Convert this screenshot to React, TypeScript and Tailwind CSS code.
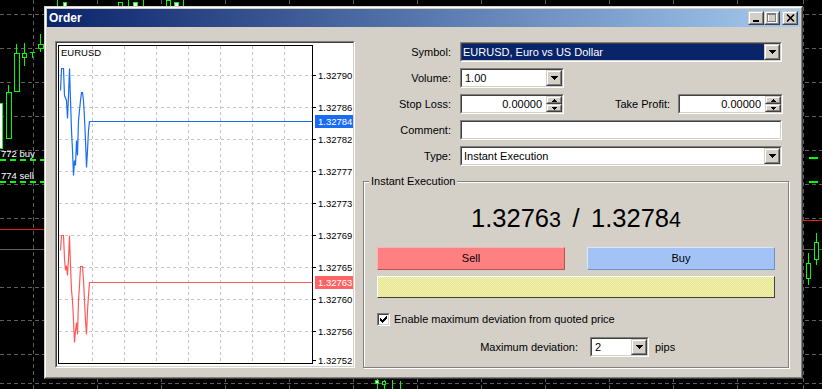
import React from "react";

const FONT = "font-['Liberation_Sans',Arial,sans-serif]";
const sunkenOuter = "border border-t-[#808080] border-l-[#808080] border-b-white border-r-white";
const sunkenInner = "border border-t-[#404040] border-l-[#404040] border-b-[#d4d0c8] border-r-[#d4d0c8]";
const raisedOuter = "border border-t-[#d4d0c8] border-l-[#d4d0c8] border-b-[#404040] border-r-[#404040]";
const raisedInner = "border border-t-white border-l-white border-b-[#808080] border-r-[#808080]";

function DownArrow() {
  return (
    <svg width="7" height="4" viewBox="0 0 7 4" shapeRendering="crispEdges">
      <rect x="0" y="0" width="7" height="1" fill="#000" />
      <rect x="1" y="1" width="5" height="1" fill="#000" />
      <rect x="2" y="2" width="3" height="1" fill="#000" />
      <rect x="3" y="3" width="1" height="1" fill="#000" />
    </svg>
  );
}

function SmallArrow({ up }: { up?: boolean }) {
  return (
    <svg width="5" height="3" viewBox="0 0 5 3" shapeRendering="crispEdges">
      {up ? (
        <>
          <rect x="2" y="0" width="1" height="1" fill="#000" />
          <rect x="1" y="1" width="3" height="1" fill="#000" />
          <rect x="0" y="2" width="5" height="1" fill="#000" />
        </>
      ) : (
        <>
          <rect x="0" y="0" width="5" height="1" fill="#000" />
          <rect x="1" y="1" width="3" height="1" fill="#000" />
          <rect x="2" y="2" width="1" height="1" fill="#000" />
        </>
      )}
    </svg>
  );
}

function Field({ className = "", inner = "", children }: { className?: string; inner?: string; children?: React.ReactNode }) {
  return (
    <div className={`${sunkenOuter} h-[20px] ${className}`}>
      <div className={`${sunkenInner} h-full w-full bg-white flex items-stretch ${inner}`}>{children}</div>
    </div>
  );
}

function DropBtn() {
  return (
    <div className={`${raisedOuter} w-[16px] h-full shrink-0 bg-[#d4d0c8]`}>
      <div className={`${raisedInner} w-full h-full flex items-center justify-center`}>
        <DownArrow />
      </div>
    </div>
  );
}

function SpinBtns() {
  return (
    <div className="w-[16px] h-full shrink-0 flex flex-col">
      <div className={`${raisedOuter} flex-1 bg-[#d4d0c8]`}>
        <div className={`${raisedInner} w-full h-full flex items-center justify-center`}>
          <SmallArrow up />
        </div>
      </div>
      <div className={`${raisedOuter} flex-1 bg-[#d4d0c8]`}>
        <div className={`${raisedInner} w-full h-full flex items-center justify-center`}>
          <SmallArrow />
        </div>
      </div>
    </div>
  );
}

function TitleBtn({ children }: { children: React.ReactNode }) {
  return (
    <div className={`${raisedOuter} w-[16px] h-[14px] bg-[#d4d0c8]`}>
      <div className={`${raisedInner} w-full h-full flex items-center justify-center`}>{children}</div>
    </div>
  );
}

function Background() {
  const hl = [14, 48, 82, 116, 150, 184, 218, 287, 320, 354, 383];
  const green = "#00ff00";
  const ff = "Liberation Sans, Arial, sans-serif";
  return (
    <svg className="absolute left-0 top-0" width="822" height="389" viewBox="0 0 822 389" shapeRendering="crispEdges">
      {hl.map((y) => (
        <line key={y} x1="0" x2="822" y1={y + 0.5} y2={y + 0.5} stroke="#5f5f5f" strokeDasharray="4 3" />
      ))}
      <line x1="0" x2="822" y1="249.5" y2="249.5" stroke="#5f5f5f" />
      {[33, 97, 161, 225, 289, 353, 417, 481, 545, 609, 673, 737, 803].map((x) => (
        <line key={x} x1={x + 0.5} x2={x + 0.5} y1="0" y2="389" stroke="#5f5f5f" strokeDasharray="4 3" />
      ))}
      <line x1="0" x2="44" y1="229.5" y2="229.5" stroke="#e02020" />
      <line x1="803" x2="822" y1="220.5" y2="220.5" stroke="#e02020" />
      <rect x="-2" y="103" width="4" height="45" fill="#fff" stroke={green} />
      <line x1="8.5" x2="8.5" y1="85" y2="92" stroke={green} />
      <rect x="6.5" y="92.5" width="5" height="46" fill="#000" stroke={green} />
      <line x1="16.5" x2="16.5" y1="44" y2="53" stroke={green} />
      <rect x="14.5" y="53.5" width="5" height="38" fill="#000" stroke={green} />
      <line x1="24.5" x2="24.5" y1="43" y2="66" stroke={green} />
      <rect x="22.5" y="53.5" width="4" height="4" fill="#000" stroke={green} />
      <line x1="32.5" x2="32.5" y1="52" y2="58" stroke={green} />
      <line x1="30" x2="35" y1="52.5" y2="52.5" stroke={green} />
      <line x1="40.5" x2="40.5" y1="34" y2="52" stroke={green} />
      <rect x="38.5" y="44.5" width="5" height="4" fill="#000" stroke={green} />
      <line x1="57.5" x2="57.5" y1="0" y2="6" stroke={green} />
      <rect x="63.5" y="2.5" width="3" height="4" fill="#fff" stroke={green} />
      <rect x="118.5" y="2.5" width="4" height="4" fill="#000" stroke={green} />
      <line x1="128.5" x2="128.5" y1="0" y2="6" stroke={green} />
      <rect x="133.5" y="2.5" width="4" height="4" fill="#fff" stroke={green} />
      <line x1="143.5" x2="143.5" y1="0" y2="6" stroke={green} />
      <rect x="166.5" y="0" width="4" height="6" fill="#000" stroke={green} />
      <rect x="174.5" y="2.5" width="4" height="4" fill="#fff" stroke={green} />
      <line x1="183.5" x2="183.5" y1="0" y2="6" stroke={green} />
      <line x1="0" x2="44" y1="159.5" y2="159.5" stroke={green} strokeWidth="2" strokeDasharray="6 4" />
      <line x1="0" x2="44" y1="181.5" y2="181.5" stroke={green} strokeWidth="2" strokeDasharray="6 4" />
      <text x="1" y="157" fill="#fff" fontSize="9.5" fontFamily={ff}>772 buy</text>
      <text x="1" y="179" fill="#fff" fontSize="9.5" fontFamily={ff}>774 sell</text>
      <line x1="809" x2="818" y1="157.5" y2="157.5" stroke={green} strokeWidth="2" />
      <line x1="809" x2="818" y1="181.5" y2="181.5" stroke={green} strokeWidth="2" />
      <line x1="816.5" x2="816.5" y1="233" y2="265" stroke={green} />
      <rect x="814.5" y="242.5" width="4" height="17" fill="#000" stroke={green} />
      <line x1="808.5" x2="808.5" y1="253" y2="285" stroke={green} />
      <rect x="806.5" y="263.5" width="4" height="15" fill="#000" stroke={green} />
      <line x1="377.5" x2="377.5" y1="379" y2="389" stroke={green} />
      <rect x="375.5" y="380.5" width="3" height="3" fill="#fff" stroke={green} />
      <line x1="384.5" x2="384.5" y1="380" y2="389" stroke={green} />
      <rect x="382.5" y="381.5" width="3" height="3" fill="#000" stroke={green} />
      <line x1="392.5" x2="392.5" y1="380" y2="389" stroke={green} />
      <line x1="400.5" x2="400.5" y1="381" y2="389" stroke={green} />
    </svg>
  );
}

const bluePts: [number, number][] = [
  [60, 90], [61, 68], [63, 68], [64, 95], [66, 100], [67, 118], [68, 95], [69, 68], [70, 100], [71, 130], [72, 150], [73, 175],
  [74, 160], [75, 165], [76, 140], [77, 155], [78, 120], [79, 110], [80, 100], [81, 92], [82, 92], [83, 100], [84, 118],
  [85, 140], [86, 167], [87, 150], [88, 130], [89, 121], [312, 121],
];
const redPts: [number, number][] = [
  [60, 250], [61, 235], [63, 235], [64, 258], [65, 270], [66, 265], [67, 275], [68, 258], [69, 235], [70, 265], [71, 290],
  [72, 300], [73, 320], [74, 342], [75, 330], [76, 322], [77, 334], [78, 300], [79, 285], [80, 266], [82, 266], [83, 280],
  [84, 300], [85, 320], [86, 334], [87, 310], [88, 295], [89, 282], [312, 282],
];

function Chart() {
  const vx = [92, 124, 156, 188, 220, 252, 284];
  const hy = [75, 107, 139, 171, 203, 235, 267, 299, 331];
  const labels: [string, number][] = [
    ["1.32790", 75], ["1.32786", 107], ["1.32782", 139], ["1.32777", 171], ["1.32773", 203],
    ["1.32769", 235], ["1.32765", 267], ["1.32760", 299], ["1.32756", 331], ["1.32752", 360],
  ];
  const pts = (p: [number, number][]) => p.map(([x, y]) => `${x + 0.5},${y + 0.5}`).join(" ");
  const ff = "Liberation Sans, Arial, sans-serif";
  return (
    <svg width="296" height="323" viewBox="57 43 296 323" className="block">
      <rect x="57" y="43" width="296" height="323" fill="#fff" />
      <g shapeRendering="crispEdges">
        {vx.map((x) => (
          <line key={x} x1={x + 0.5} x2={x + 0.5} y1="46" y2="363" stroke="#c4c4c4" strokeDasharray="3 3" />
        ))}
        {hy.map((y) => (
          <line key={y} x1="59" x2="312" y1={y + 0.5} y2={y + 0.5} stroke="#c4c4c4" strokeDasharray="3 3" />
        ))}
        <rect x="58.5" y="45.5" width="254" height="318" fill="none" stroke="#000" />
        {labels.map(([, y]) => (
          <line key={y} x1="312" x2="316" y1={y + 0.5} y2={y + 0.5} stroke="#000" />
        ))}
        <rect x="315" y="115" width="38" height="13" fill="#1a6cf2" />
        <rect x="315" y="276" width="38" height="13" fill="#ff6464" />
      </g>
      <polyline points={pts(bluePts)} fill="none" stroke="#1a6cf2" strokeWidth="1.2" />
      <polyline points={pts(redPts)} fill="none" stroke="#ff5a5a" strokeWidth="1.2" />
      <text x="61" y="56" fontSize="9.5" fontFamily={ff} fill="#000">EURUSD</text>
      {labels.map(([t, y]) => (
        <text key={t} x="318" y={y + 3.5} fontSize="9.5" fontFamily={ff} fill="#000">{t}</text>
      ))}
      <text x="318" y="124.5" fontSize="9.5" fontFamily={ff} fill="#fff">1.32784</text>
      <text x="318" y="285.5" fontSize="9.5" fontFamily={ff} fill="#fff">1.32763</text>
    </svg>
  );
}

export default function App() {
  return (
    <div className={`relative w-[822px] h-[389px] overflow-hidden bg-black ${FONT} text-[11px] text-black`}>
      <Background />
      <div className={`absolute left-[44px] top-[6px] w-[759px] h-[373px] ${raisedOuter}`}>
        <div className={`${raisedInner} w-full h-full bg-[#d4d0c8] p-px flex flex-col`}>
          <div className="h-[18px] shrink-0 flex items-center bg-[linear-gradient(90deg,#0a246a,#a6caf0)] pl-[2px] pr-[2px]">
            <span className="text-white font-bold text-[12px] leading-none">Order</span>
            <div className="ml-auto flex items-center">
              <TitleBtn>
                <svg width="8" height="8" viewBox="0 0 8 8" shapeRendering="crispEdges">
                  <rect x="1" y="6" width="6" height="2" fill="#000" />
                </svg>
              </TitleBtn>
              <TitleBtn>
                <svg width="10" height="10" viewBox="0 0 10 10" shapeRendering="crispEdges">
                  <rect x="1.5" y="1.5" width="8" height="8" fill="none" stroke="#fff" />
                  <rect x="0.5" y="0.5" width="8" height="8" fill="none" stroke="#808080" />
                  <rect x="0" y="1" width="9" height="1" fill="#808080" />
                </svg>
              </TitleBtn>
              <div className="ml-[2px]">
                <TitleBtn>
                  <svg width="9" height="8" viewBox="0 0 9 8">
                    <path d="M1 0.5 L8 7.5 M8 0.5 L1 7.5" stroke="#000" strokeWidth="1.6" />
                  </svg>
                </TitleBtn>
              </div>
            </div>
          </div>
          <div className="flex-1 flex pl-[8px] pt-[14px]">
            <div className={`${sunkenOuter} w-[300px] h-[327px] shrink-0`}>
              <div className={`${sunkenInner} w-full h-full bg-white`}>
                <Chart />
              </div>
            </div>
            <div className="ml-[8px] w-[426px] flex flex-col pt-px">
              <div className="flex flex-col gap-[6px]">
                <div className="flex items-center">
                  <div className="w-[88px] text-right">Symbol:</div>
                  <Field className="ml-[9px] w-[322px]" inner="p-0">
                    <div className="flex-1 bg-[#0a246a] text-white pl-[1px] flex items-center">EURUSD, Euro vs US Dollar</div>
                    <DropBtn />
                  </Field>
                </div>
                <div className="flex items-center">
                  <div className="w-[88px] text-right">Volume:</div>
                  <Field className="ml-[9px] w-[104px]">
                    <div className="flex-1 pl-[3px] flex items-center">1.00</div>
                    <DropBtn />
                  </Field>
                </div>
                <div className="flex items-center">
                  <div className="w-[88px] text-right">Stop Loss:</div>
                  <Field className="ml-[9px] w-[104px]">
                    <div className="flex-1 pr-[4px] flex items-center justify-end">0.00000</div>
                    <SpinBtns />
                  </Field>
                  <div className="w-[106px] text-right">Take Profit:</div>
                  <Field className="ml-[8px] w-[105px]">
                    <div className="flex-1 pr-[4px] flex items-center justify-end">0.00000</div>
                    <SpinBtns />
                  </Field>
                </div>
                <div className="flex items-center">
                  <div className="w-[88px] text-right">Comment:</div>
                  <Field className="ml-[9px] w-[322px]" />
                </div>
                <div className="flex items-center">
                  <div className="w-[88px] text-right">Type:</div>
                  <Field className="ml-[9px] w-[322px]">
                    <div className="flex-1 pl-[2px] flex items-center">Instant Execution</div>
                    <DropBtn />
                  </Field>
                </div>
              </div>
              <div className="relative mt-[15px] h-[187px] border border-[#808080] shadow-[inset_1px_1px_0_#fff,1px_1px_0_#fff] flex flex-col px-[13px]">
                <span className="absolute left-[5px] -top-[7px] px-[2px] bg-[#d4d0c8] leading-[13px]">Instant Execution</span>
                <div className="mt-[23px] h-[27px] leading-[27px] text-[25.5px] flex justify-center items-baseline whitespace-nowrap">
                  <span>1.3276</span>
                  <span className="text-[21.5px]">3</span>
                  <span className="inline-block w-[30px] text-center">/</span>
                  <span>1.3278</span>
                  <span className="text-[21.5px]">4</span>
                </div>
                <div className="mt-[15px] flex gap-[22px] h-[23px]">
                  <div className="flex-1 border border-t-[#ffb0b0] border-l-[#ffb0b0] border-b-[#c05050] border-r-[#c05050] bg-[#ff8080] flex items-center justify-center">Sell</div>
                  <div className="flex-1 border border-t-[#d8e6ff] border-l-[#d8e6ff] border-b-[#7090c8] border-r-[#7090c8] bg-[#a3c3f7] flex items-center justify-center">Buy</div>
                </div>
                <div className="mt-[6px] h-[22px] border border-t-white border-l-white border-b-[#404040] border-r-[#404040] bg-[repeating-conic-gradient(#f4f4ac_0%_25%,#e2e292_0%_50%)] bg-[length:2px_2px]" />
                <div className="mt-[15px] h-[13px] flex items-center">
                  <div className={`${sunkenOuter} w-[13px] h-[13px]`}>
                    <div className={`${sunkenInner} w-full h-full bg-white flex items-center justify-center`}>
                      <svg width="7" height="7" viewBox="0 0 7 7" shapeRendering="crispEdges">
                        <path d="M0 2h1v1h1v1h1V3h1V2h1V1h1V0h1v3H6v1H5v1H4v1H3v1H2V6H1V5H0z" fill="#000" />
                      </svg>
                    </div>
                  </div>
                  <span className="ml-[4px]">Enable maximum deviation from quoted price</span>
                </div>
                <div className="mt-[11px] h-[20px] flex items-center">
                  <div className="w-[201px] text-right">Maximum deviation:</div>
                  <Field className="ml-[12px] w-[59px]">
                    <div className="flex-1 pl-[3px] flex items-center">2</div>
                    <DropBtn />
                  </Field>
                  <span className="ml-[6px]">pips</span>
                </div>
              </div>
            </div>
          </div>
        </div>
      </div>
    </div>
  );
}
